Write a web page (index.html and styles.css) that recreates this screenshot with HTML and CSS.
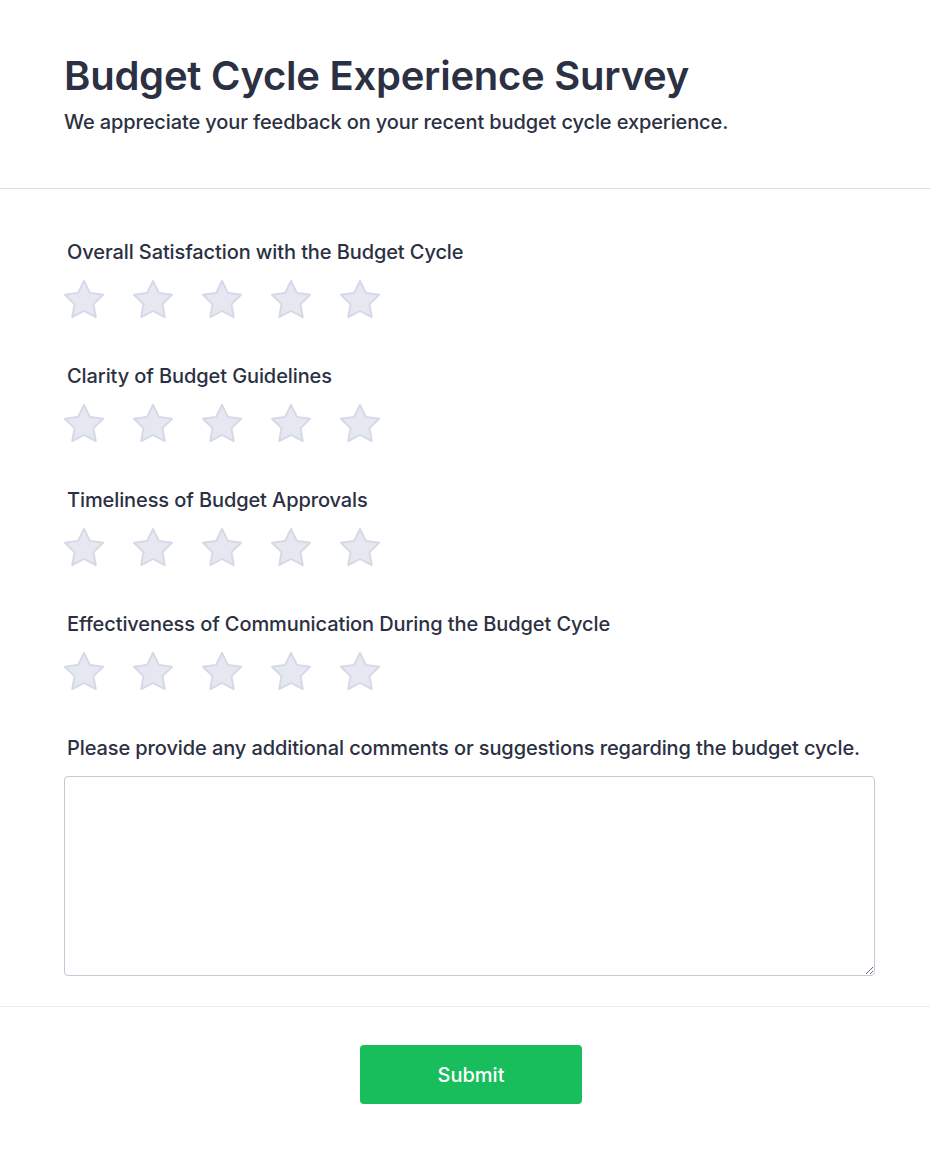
FILE: index.html
```html
<!DOCTYPE html>
<html lang="en">
<head>
<meta charset="utf-8">
<title>Budget Cycle Experience Survey</title>
<link rel="stylesheet" href="styles.css">
</head>
<body>
<form class="survey">
  <header class="survey-header">
    <h1 class="title">Budget Cycle Experience Survey</h1>
    <p class="subtitle">We appreciate your feedback on your recent budget cycle experience.</p>
  </header>
  <section class="survey-body">
    <div class="question">
      <label class="q-label">Overall Satisfaction with the Budget Cycle</label>
      <div class="stars">
        <svg class="star" viewBox="1.5 1.5 21 21"><polygon points="12,2 15.09,8.26 22,9.27 17,14.14 18.18,21.02 12,17.77 5.82,21.02 7,14.14 2,9.27 8.91,8.26"/></svg>
        <svg class="star" viewBox="1.5 1.5 21 21"><polygon points="12,2 15.09,8.26 22,9.27 17,14.14 18.18,21.02 12,17.77 5.82,21.02 7,14.14 2,9.27 8.91,8.26"/></svg>
        <svg class="star" viewBox="1.5 1.5 21 21"><polygon points="12,2 15.09,8.26 22,9.27 17,14.14 18.18,21.02 12,17.77 5.82,21.02 7,14.14 2,9.27 8.91,8.26"/></svg>
        <svg class="star" viewBox="1.5 1.5 21 21"><polygon points="12,2 15.09,8.26 22,9.27 17,14.14 18.18,21.02 12,17.77 5.82,21.02 7,14.14 2,9.27 8.91,8.26"/></svg>
        <svg class="star" viewBox="1.5 1.5 21 21"><polygon points="12,2 15.09,8.26 22,9.27 17,14.14 18.18,21.02 12,17.77 5.82,21.02 7,14.14 2,9.27 8.91,8.26"/></svg>
      </div>
    </div>
    <div class="question">
      <label class="q-label">Clarity of Budget Guidelines</label>
      <div class="stars">
        <svg class="star" viewBox="1.5 1.5 21 21"><polygon points="12,2 15.09,8.26 22,9.27 17,14.14 18.18,21.02 12,17.77 5.82,21.02 7,14.14 2,9.27 8.91,8.26"/></svg>
        <svg class="star" viewBox="1.5 1.5 21 21"><polygon points="12,2 15.09,8.26 22,9.27 17,14.14 18.18,21.02 12,17.77 5.82,21.02 7,14.14 2,9.27 8.91,8.26"/></svg>
        <svg class="star" viewBox="1.5 1.5 21 21"><polygon points="12,2 15.09,8.26 22,9.27 17,14.14 18.18,21.02 12,17.77 5.82,21.02 7,14.14 2,9.27 8.91,8.26"/></svg>
        <svg class="star" viewBox="1.5 1.5 21 21"><polygon points="12,2 15.09,8.26 22,9.27 17,14.14 18.18,21.02 12,17.77 5.82,21.02 7,14.14 2,9.27 8.91,8.26"/></svg>
        <svg class="star" viewBox="1.5 1.5 21 21"><polygon points="12,2 15.09,8.26 22,9.27 17,14.14 18.18,21.02 12,17.77 5.82,21.02 7,14.14 2,9.27 8.91,8.26"/></svg>
      </div>
    </div>
    <div class="question">
      <label class="q-label">Timeliness of Budget Approvals</label>
      <div class="stars">
        <svg class="star" viewBox="1.5 1.5 21 21"><polygon points="12,2 15.09,8.26 22,9.27 17,14.14 18.18,21.02 12,17.77 5.82,21.02 7,14.14 2,9.27 8.91,8.26"/></svg>
        <svg class="star" viewBox="1.5 1.5 21 21"><polygon points="12,2 15.09,8.26 22,9.27 17,14.14 18.18,21.02 12,17.77 5.82,21.02 7,14.14 2,9.27 8.91,8.26"/></svg>
        <svg class="star" viewBox="1.5 1.5 21 21"><polygon points="12,2 15.09,8.26 22,9.27 17,14.14 18.18,21.02 12,17.77 5.82,21.02 7,14.14 2,9.27 8.91,8.26"/></svg>
        <svg class="star" viewBox="1.5 1.5 21 21"><polygon points="12,2 15.09,8.26 22,9.27 17,14.14 18.18,21.02 12,17.77 5.82,21.02 7,14.14 2,9.27 8.91,8.26"/></svg>
        <svg class="star" viewBox="1.5 1.5 21 21"><polygon points="12,2 15.09,8.26 22,9.27 17,14.14 18.18,21.02 12,17.77 5.82,21.02 7,14.14 2,9.27 8.91,8.26"/></svg>
      </div>
    </div>
    <div class="question">
      <label class="q-label">Effectiveness of Communication During the Budget Cycle</label>
      <div class="stars">
        <svg class="star" viewBox="1.5 1.5 21 21"><polygon points="12,2 15.09,8.26 22,9.27 17,14.14 18.18,21.02 12,17.77 5.82,21.02 7,14.14 2,9.27 8.91,8.26"/></svg>
        <svg class="star" viewBox="1.5 1.5 21 21"><polygon points="12,2 15.09,8.26 22,9.27 17,14.14 18.18,21.02 12,17.77 5.82,21.02 7,14.14 2,9.27 8.91,8.26"/></svg>
        <svg class="star" viewBox="1.5 1.5 21 21"><polygon points="12,2 15.09,8.26 22,9.27 17,14.14 18.18,21.02 12,17.77 5.82,21.02 7,14.14 2,9.27 8.91,8.26"/></svg>
        <svg class="star" viewBox="1.5 1.5 21 21"><polygon points="12,2 15.09,8.26 22,9.27 17,14.14 18.18,21.02 12,17.77 5.82,21.02 7,14.14 2,9.27 8.91,8.26"/></svg>
        <svg class="star" viewBox="1.5 1.5 21 21"><polygon points="12,2 15.09,8.26 22,9.27 17,14.14 18.18,21.02 12,17.77 5.82,21.02 7,14.14 2,9.27 8.91,8.26"/></svg>
      </div>
    </div>
    <div class="question last">
      <label class="q-label">Please provide any additional comments or suggestions regarding the budget cycle.</label>
      <textarea class="comments"></textarea>
    </div>
  </section>
  <footer class="survey-footer">
    <button type="button" class="submit">Submit</button>
  </footer>
</form>
</body>
</html>
```

FILE: styles.css
```css
* { box-sizing: border-box; }
html, body { margin: 0; padding: 0; background: #ffffff; }
body {
  font-family: Inter, "Noto Sans", sans-serif;
  color: #2d3142;
}
.survey { width: 930px; }
.survey-header {
  padding: 52px 64px 0 64px;
  height: 189px;
  border-bottom: 1px solid #dcdce9;
}
.title {
  margin: 0;
  font-size: 40px;
  font-weight: 600;
  line-height: 48px;
  letter-spacing: -0.24px;
  color: #2b3042;
}
.subtitle {
  margin: 7px 0 0 0;
  font-size: 20px;
  font-weight: 500;
  line-height: 30px;
  letter-spacing: -0.12px;
  color: #2b3042;
}
.survey-body {
  padding: 48px 55px 30px 64px;
  border-bottom: 1px solid #e9edf1;
}
.question { display: flex; flex-direction: column; }
.q-label {
  display: block;
  margin: 0 0 14px 3px;
  padding-top: 2px;
  font-size: 20px;
  font-weight: 500;
  line-height: 27px;
  letter-spacing: -0.1px;
  color: #2b3042;
}
.stars {
  display: flex;
  gap: 29px;
  height: 40px;
  margin-bottom: 41px;
}
.star { width: 40px; height: 40px; display: block; }
.star polygon {
  fill: #e5e7f1;
  stroke: #d5d8e6;
  stroke-width: 1;
  stroke-linejoin: round;
}
.comments {
  display: block;
  width: 811px;
  height: 200px;
  border: 1px solid #c7c8d8;
  border-radius: 4px;
  font-family: inherit;
  font-size: 16px;
  resize: vertical;
}
.survey-footer {
  display: flex;
  justify-content: center;
  padding: 38px 0 50px 12px;
}
.submit {
  width: 222px;
  height: 59px;
  background: #19be5c;
  color: #ffffff;
  border: none;
  border-radius: 4px;
  font-family: inherit;
  font-size: 20px;
  font-weight: 500;
}
```
